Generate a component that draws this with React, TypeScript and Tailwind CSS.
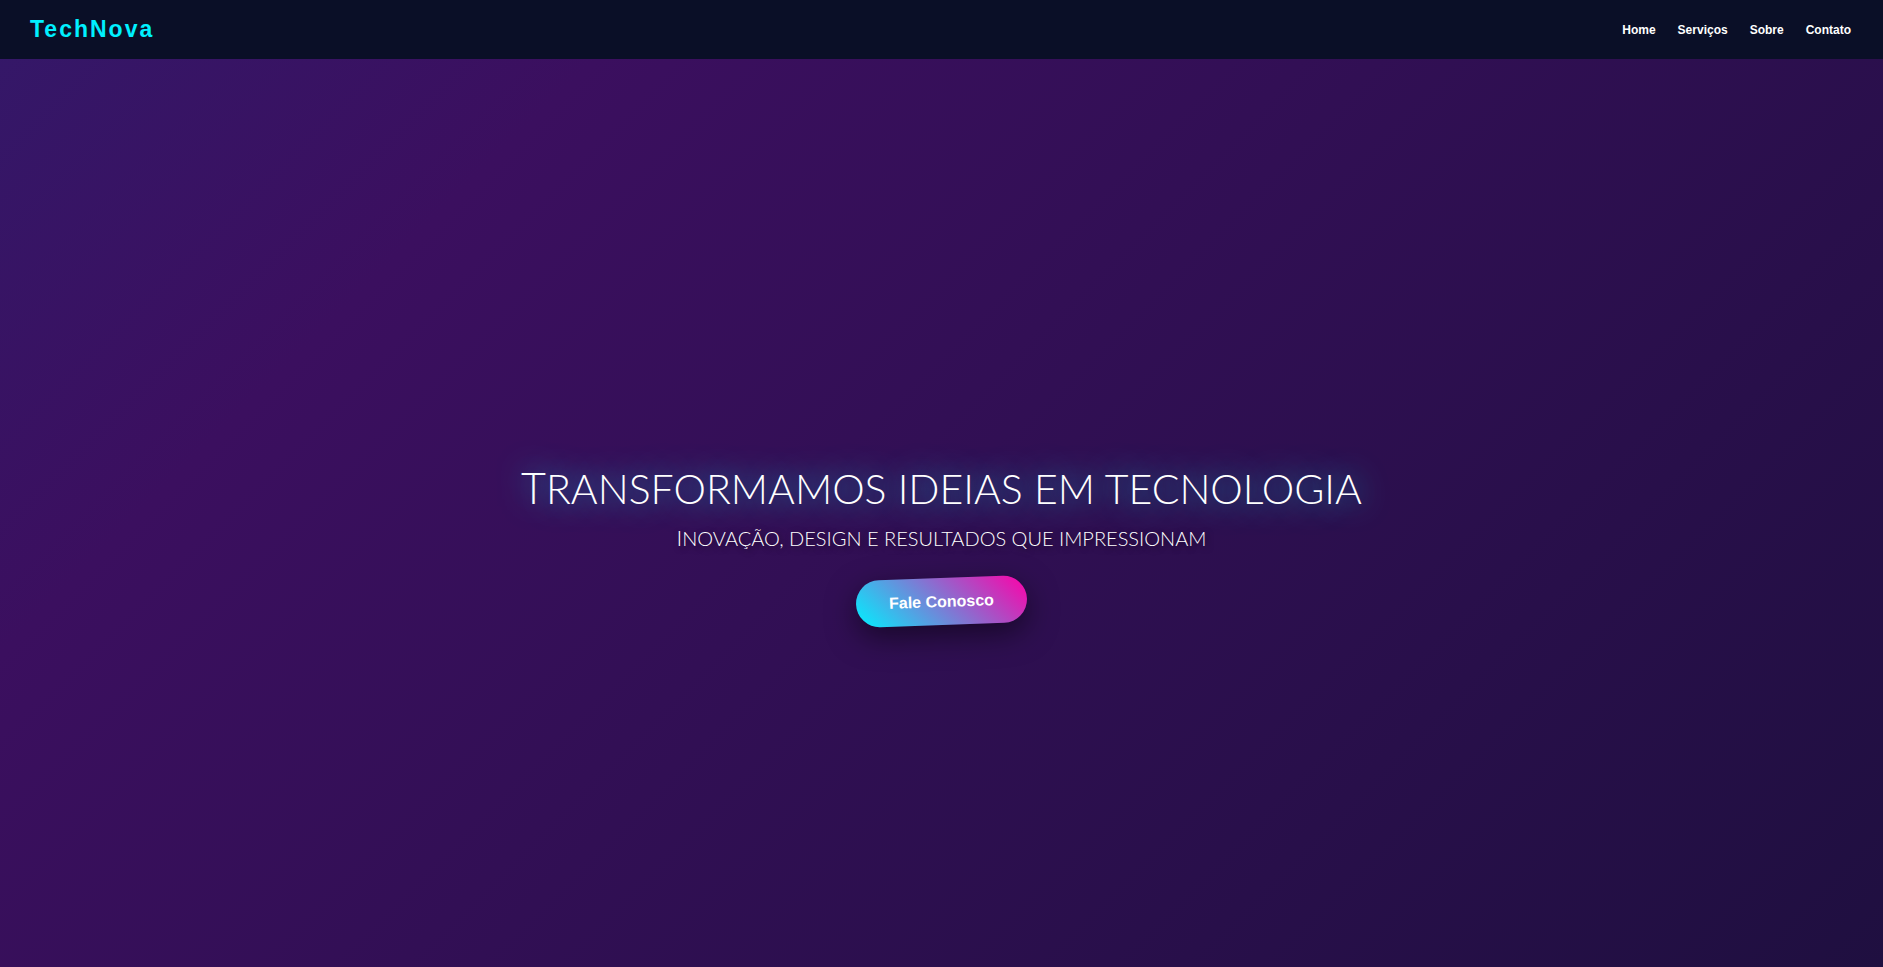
const links = [
  { label: "Home", href: "#home" },
  { label: "Serviços", href: "#servicos" },
  { label: "Sobre", href: "#sobre" },
  { label: "Contato", href: "#contato" },
];

export default function App() {
  return (
    <div className="flex min-h-screen flex-col bg-[linear-gradient(135deg,#341869_0%,#3b0f5f_23%,#1f0f40_100%)] font-['Liberation_Sans',Arial,sans-serif] text-white">
      <header className="flex items-center justify-between bg-[#0a0f27] py-4 pr-8 pl-[30px]">
        <div className="text-[23px] leading-[27px] font-bold tracking-[2px] text-[#00f0ff]">TechNova</div>
        <nav className="flex gap-[22px] text-xs font-bold">
          {links.map((l) => (
            <a key={l.href} href={l.href}>
              {l.label}
            </a>
          ))}
        </nav>
      </header>
      <main id="home" className="flex flex-1 flex-col items-center justify-center px-6 pt-16 text-center">
        <h1 className="font-[Lato,sans-serif] text-[41px] leading-[46px] font-light uppercase [text-shadow:0_0_30px_rgba(0,240,255,0.8)] first-letter:text-[43px]">
          Transformamos ideias em tecnologia
        </h1>
        <p className="mt-3.5 font-[Lato,sans-serif] text-xl leading-6 font-light uppercase [text-shadow:2px_2px_6px_rgba(0,0,0,0.6)] first-letter:text-[22px]">
          Inovação, design e resultados que impressionam
        </p>
        <button
          type="button"
          className="mt-7 -rotate-2 rounded-full bg-[linear-gradient(45deg,#00f0ff,#ff00a8)] px-[33px] py-3.5 text-base leading-[19px] font-bold shadow-[0_10px_30px_rgba(0,0,0,0.5)]"
        >
          Fale Conosco
        </button>
      </main>
    </div>
  );
}
